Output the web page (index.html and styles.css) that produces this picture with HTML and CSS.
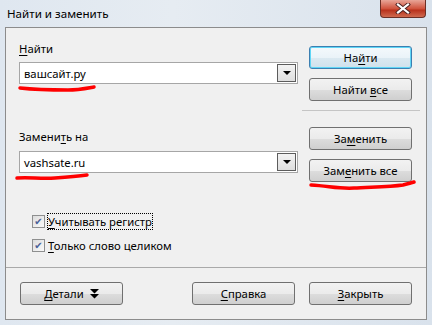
FILE: index.html
```html
<!doctype html>
<html>
<head>
<meta charset="utf-8">
<title>Найти и заменить</title>
<link rel="stylesheet" href="styles.css">
</head>
<body>
<div class="window">
	<div class="titlebar">
		<span class="title">Найти и заменить</span>
		<div class="close">
			<svg width="16" height="11" viewBox="0 0 16 11"><path d="M3 1.5 L13 9.5 M13 1.5 L3 9.5" stroke="#4a2020" stroke-width="4" stroke-linecap="square"/><path d="M3 1.5 L13 9.5 M13 1.5 L3 9.5" stroke="#fff" stroke-width="2.2" stroke-linecap="square"/></svg>
		</div>
	</div>

	<div class="client">
		<div class="main">
			<div class="fields">
				<div class="label"><u>Н</u>айти</div>
				<div class="combo">
					<span>вашсайт.ру</span>
					<b class="arrow"><i></i></b>
					<svg class="scribble s1" width="80" height="10" viewBox="0 0 80 10"><path d="M2 4 C20 6 40 6 50 6 C60 6 70 4 76 3" stroke="#f00" stroke-width="3.5" fill="none" stroke-linecap="round"/></svg>
				</div>

				<div class="label second">Замени<u>т</u>ь на</div>
				<div class="combo">
					<span>vashsate.ru</span>
					<b class="arrow"><i></i></b>
					<svg class="scribble s2" width="80" height="10" viewBox="0 0 80 10"><path d="M2 6 C15 5 25 7 40 6 C55 5 65 4 72 3" stroke="#f00" stroke-width="3.5" fill="none" stroke-linecap="round"/></svg>
				</div>

				<div class="checks">
					<label class="check"><b class="box">&#10004;</b><span class="focus"><u>У</u>читывать регистр</span></label>
					<label class="check"><b class="box">&#10004;</b><span><u>Т</u>олько слово целиком</span></label>
				</div>
			</div>

			<div class="buttons">
				<div class="btn def"><span>На<u>й</u>ти</span></div>
				<div class="btn"><span>Найти <u>в</u>се</span></div>
				<div class="sep"></div>
				<div class="btn"><span>За<u>м</u>енить</span></div>
				<div class="btn last"><span>Зам<u>е</u>нить все</span>
					<svg class="scribble s3" width="108" height="12" viewBox="0 0 108 12"><path d="M2 5 C20 6 30 9 45 8 C60 7 80 7 94 5 C98 4 102 3 105 2" stroke="#f00" stroke-width="3.5" fill="none" stroke-linecap="round"/></svg>
				</div>
			</div>
		</div>

		<div class="footer">
			<div class="btn"><span><u>Д</u>етали</span><svg class="dbl" width="9" height="10" viewBox="0 0 9 10"><path d="M0 0 H9 L4.5 4.5 Z M0 5 H9 L4.5 9.5 Z" fill="#000"/></svg></div>
			<div class="right">
				<div class="btn"><span><u>С</u>правка</span></div>
				<div class="btn"><span><u>З</u>акрыть</span></div>
			</div>
		</div>
	</div>
</div>
</body>
</html>
```

FILE: styles.css
```css
*{ margin:0; padding:0; box-sizing:border-box}
body{ background:#dbe3ec; font-family:"Noto Sans","DejaVu Sans",sans-serif; font-size:11.3px; color:#000}
u{ text-decoration:underline; text-underline-offset:2px}

.window{ width:432px; height:325px; background:linear-gradient(90deg,#dfe7f0,#e6ecf2 40%,#d9e2ec); padding:0 5px}
.titlebar{ height:27px; display:flex; align-items:flex-start; justify-content:space-between}
.title{ padding:6px 0 0 2px; font-size:11.6px; color:#000}
.close{ width:46px; height:18px; margin-right:1px; border:1px solid #6b2f25; border-top:none; border-radius:0 0 4px 4px; background:linear-gradient(#e8a598,#d0543e 50%,#b9321c 60%,#cf6a4f); display:flex; align-items:center; justify-content:center}

.client{ height:293px; border:1px solid #8c8c8c; background:#f0f0f0; display:flex; flex-direction:column}
.main{ height:240px; display:flex; border-bottom:1px solid #a9a9a9}

.fields{ width:296px; padding:13px 0 0 13px}
.label{ height:16px; line-height:16px; margin-bottom:5px}
.label.second{ margin-top:45px; margin-bottom:6px}
.combo{ position:relative; width:279px; height:22px; border:1px solid #a6a6a6; background:#fff; display:flex; align-items:center; padding-left:4px}
.combo span{ flex:1}
.arrow{ width:19px; height:18px; margin-right:1px; border:1px solid #5c5c5c; background:linear-gradient(#f3f3f3,#dedede); display:flex; align-items:center; justify-content:center}
.arrow i{ width:0; height:0; border-left:4px solid transparent; border-right:4px solid transparent; border-top:4px solid #000}

.scribble{ position:absolute; pointer-events:none}
.s1{ left:-2px; top:21px}
.s2{ left:-5px; top:20px}
.s3{ left:-1px; top:20px}

.checks{ padding:39px 0 0 13px}
.check{ display:flex; align-items:center; height:18px; margin-bottom:6px}
.box{ width:13px; height:13px; border:1px solid #8e8f8f; background:linear-gradient(135deg,#dcdcdc,#fafafa); color:#4a5f97; font-size:10px; line-height:11px; text-align:center; margin-right:3px; font-weight:normal}
.focus{ outline:1px dotted #000; outline-offset:0}

.buttons{ width:114px; padding:18px 0 0 7px}
.btn{ position:relative; width:103px; height:23px; border:1px solid #707070; border-radius:3px; background:linear-gradient(#f2f2f2,#ebebeb 50%,#dddddd 51%,#cfcfcf); display:flex; align-items:center; justify-content:center; margin-bottom:9px}
.btn.def{ border-color:#3c7fb1; box-shadow:inset 0 0 0 1px #5fd6f6; background:linear-gradient(#f4f9fc,#eaf3f8 50%,#dbe9f1 51%,#cfe1ec)}
.sep{ width:118px; margin:7px 0 16px -7px; border-top:1px solid #c5c5c5}
.btn.last{ margin-bottom:0}

.footer{ flex:1; display:flex; align-items:center; justify-content:space-between; padding:0 14px 0 14px}
.footer .btn{ margin:0}
.footer .right{ display:flex; gap:14px}
.dbl{ margin-left:6px}
```
